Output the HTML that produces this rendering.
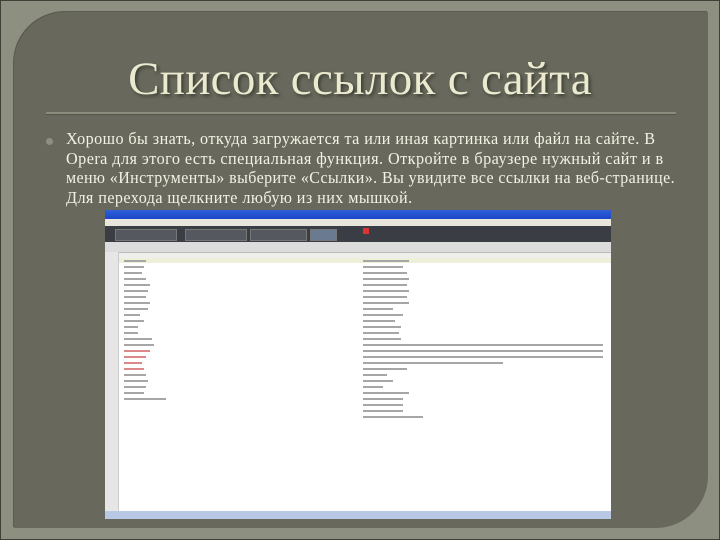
<!DOCTYPE html>
<html><head><meta charset="utf-8"><style>
body{margin:0;width:720px;height:540px;overflow:hidden;background:#8d9080;position:relative;font-family:"Liberation Serif","DejaVu Serif",serif}
.edge{position:absolute;left:0;top:0;width:718px;height:538px;border:1px solid #3e4038}
.panel{position:absolute;left:14px;top:12px;width:694px;height:516px;background:#68695c;border-radius:52px 0 52px 0;box-shadow:-1px -1px 0 #5a5c50}
.title{position:absolute;left:0;width:720px;top:52px;text-align:center;font-size:47px;color:#ebe9cf;text-shadow:2px 2px 3px #3c3d33;letter-spacing:0.3px}
.hr{position:absolute;left:46px;width:630px;top:112px;height:2px;background:#8a8c7c;border-bottom:1px solid #55564b}
.txt{position:absolute;left:66px;top:129px;font-size:17px;line-height:19.5px;color:#f2f1e4;white-space:nowrap;letter-spacing:0.45px}
.txt span{display:block;transform-origin:0 0}
.bul{position:absolute;left:46px;top:138px;width:7px;height:7px;border-radius:50%;background:#8d8f80}
.shot{position:absolute;left:105px;top:210px;width:506px;height:309px;background:#fff;overflow:hidden;font-family:"Liberation Sans",sans-serif}
.tb{height:9px;background:linear-gradient(#2f5fd8,#1c46c8)}
.menu{height:7px;background:#e8e6dc}
.tabs{height:16px;background:#3a3e44;position:relative}
.tab{position:absolute;top:3px;height:10px;background:#55595f;border:1px solid #777}
.tool{height:10px;background:#dcdcdc;border-bottom:1px solid #bbb}
.side{position:absolute;left:0;top:42px;width:13px;height:267px;background:#e6e6e6;border-right:1px solid #ccc}
.hd{position:absolute;left:14px;top:43px;width:492px;height:5px;background:#eeeeea}
.r{position:absolute;height:2px;background:#a6a6a6}
.sel{position:absolute;left:14px;top:48px;width:492px;height:5px;background:#eeefd8}
.bot{position:absolute;left:0;bottom:0;width:506px;height:8px;background:#b9c8e4}
</style></head><body>
<div class="edge"></div>
<div class="panel"></div>
<div class="title">Список ссылок с сайта</div>
<div class="hr"></div>
<div class="bul"></div>
<div class="txt"><span style="transform:scaleX(0.95)">Хорошо бы знать, откуда загружается та или иная картинка или файл на сайте. В</span><span style="transform:scaleX(0.955)">Opera для этого есть специальная функция. Откройте в браузере нужный сайт и в</span><span style="transform:scaleX(0.94)">меню «Инструменты» выберите «Ссылки». Вы увидите все ссылки на веб-странице.</span><span style="transform:scaleX(0.95)">Для перехода щелкните любую из них мышкой.</span></div>
<div class="shot">
<div class="tb"></div><div class="menu"></div>
<div class="tabs"><div class="tab" style="left:10px;width:60px"></div><div class="tab" style="left:80px;width:60px"></div><div class="tab" style="left:145px;width:55px"></div><div class="tab" style="left:205px;width:25px;background:#6a7a90"></div><div style="position:absolute;left:258px;top:2px;width:6px;height:6px;background:#d33"></div></div>
<div class="tool"></div>
<div class="side"></div>
<div class="hd"></div><div class="sel"></div>
<div id="rows"></div>
<div class="bot"></div>
</div>
<script>
var s=document.querySelector('.shot'),h='';
var L=[22,20,18,22,26,24,22,26,24,16,20,14,14,28,30,26,22,18,20,22,24,22,20,42];
var R=[46,40,44,46,44,46,44,46,30,40,32,38,36,38,240,240,240,140,44,24,30,20,46,40,40,40,60];
for(var i=0;i<27;i++){var y=50+i*6;
if(i<24)h+='<div class="r" style="left:19px;top:'+y+'px;width:'+L[i]+'px;'+(i>=15&&i<=18?'background:#d88':'')+'"></div>';
h+='<div class="r" style="left:258px;top:'+y+'px;width:'+R[i]+'px"></div>';}
s.insertAdjacentHTML('beforeend',h);
</script>
</body></html>
